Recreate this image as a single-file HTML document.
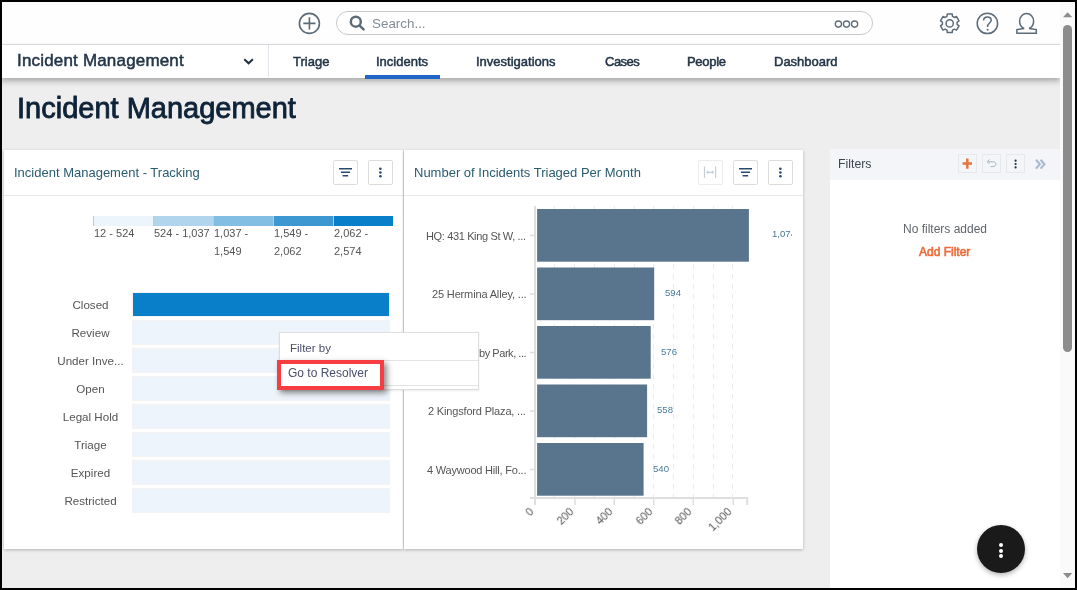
<!DOCTYPE html>
<html><head><meta charset="utf-8">
<style>
*{box-sizing:border-box;margin:0;padding:0}
html,body{width:1077px;height:590px;overflow:hidden;background:#eeeeee;font-family:"Liberation Sans",sans-serif;position:relative}
.a{position:absolute}
.t{position:absolute;white-space:nowrap;line-height:1;will-change:transform}
svg{position:absolute;overflow:visible}
</style></head><body>
  <!-- top header -->
  <div class="a" style="left:0;top:0;width:1060px;height:44px;background:#fefefe"></div>
  <div class="a" style="left:0;top:44px;width:1060px;height:1px;background:#dde1e5"></div>
  <svg style="left:0;top:0" width="1077" height="45">
    <g fill="none" stroke="#5b6b78" stroke-width="1.6">
      <circle cx="309.4" cy="23.4" r="10"/>
      <path d="M303.3 23.4H315.5M309.4 17.3V29.5"/>
    </g>
    <rect x="336.5" y="11.5" width="536" height="23" rx="11.5" fill="#fff" stroke="#c9c9c9"/>
    <g fill="none" stroke="#5b6b78" stroke-width="2.5">
      <circle cx="355.8" cy="21.7" r="5"/>
      <path d="M359.6 25.6L363.6 29.4" stroke-linecap="round"/>
    </g>
    <g fill="none" stroke="#5f6f7b" stroke-width="1.35">
      <circle cx="838.4" cy="24.1" r="3.1"/>
      <circle cx="846.5" cy="24.1" r="3.1"/>
      <circle cx="854.6" cy="24.1" r="3.1"/>
    </g>
    <!-- gear -->
    <g fill="none" stroke="#5b6b78" stroke-width="1.5">
      <path d="M952.52 16.44 L952.23 14.03 L947.27 14.03 L946.98 16.44 L945.19 17.47 L942.96 16.51 L940.48 20.82 L942.42 22.27 L942.42 24.33 L940.48 25.78 L942.96 30.09 L945.19 29.13 L946.98 30.16 L947.27 32.57 L952.23 32.57 L952.52 30.16 L954.31 29.13 L956.54 30.09 L959.02 25.78 L957.08 24.33 L957.08 22.27 L959.02 20.82 L956.54 16.51 L954.31 17.47Z" stroke-linejoin="round"/>
      <circle cx="949.7" cy="23.4" r="3.6"/>
    </g>
    <!-- help -->
    <g fill="none" stroke="#5b6b78" stroke-width="1.5">
      <circle cx="987.4" cy="23.4" r="10.2"/>
      <path d="M983.6 20.4C983.6 18.3 985.2 16.9 987.4 16.9C989.6 16.9 991.2 18.4 991.2 20.3C991.2 22.6 987.6 23.4 987.6 26.3V27"/>
    </g>
    <circle cx="987.6" cy="29.8" r="1" fill="#5b6b78"/>
    <!-- user -->
    <g fill="none" stroke="#5b6b78" stroke-width="1.5">
      <path d="M1023.6 28.2C1021.2 26.9 1019.6 24.3 1019.6 21.2C1019.6 16.8 1022.8 13.5 1026.6 13.5C1030.4 13.5 1033.6 16.8 1033.6 21.2C1033.6 24.3 1032 26.9 1029.6 28.2V28.6L1036.3 29.6V33.2H1016.9V29.6L1023.6 28.6Z"/>
    </g>
  </svg>
  <div class="t" style="left:371.5px;top:16.5px;font-size:13.4px;color:#838d96">Search...</div>

  <!-- nav bar -->
  <div class="a" style="left:0;top:45px;width:1060px;height:33px;background:#fff;box-shadow:0 3px 6px rgba(0,0,0,.3)"></div>
  <div class="a" style="left:268px;top:45px;width:1px;height:32px;background:#e3e6ea"></div>
  <div class="t" style="left:17px;top:51.5px;font-size:17px;letter-spacing:0.18px;color:#243547;-webkit-text-stroke:0.5px #243547">Incident Management</div>
  <svg style="left:0;top:0" width="300" height="80"><path d="M244.3 59.3L248.6 63.3L252.9 59.3" fill="none" stroke="#1f2f3f" stroke-width="2"/></svg>
  <div class="t" style="left:293px;top:54.7px;font-size:13px;color:#243547;-webkit-text-stroke:0.5px #243547">Triage</div>
  <div class="t" style="left:376px;top:54.7px;font-size:13px;color:#243547;-webkit-text-stroke:0.5px #243547">Incidents</div>
  <div class="a" style="left:365px;top:75px;width:75px;height:4px;background:#2166c6"></div>
  <div class="t" style="left:476px;top:54.7px;font-size:13px;color:#243547;-webkit-text-stroke:0.5px #243547">Investigations</div>
  <div class="t" style="left:605px;top:54.7px;font-size:13px;letter-spacing:-0.5px;color:#243547;-webkit-text-stroke:0.5px #243547">Cases</div>
  <div class="t" style="left:687px;top:54.7px;font-size:13px;letter-spacing:-0.3px;color:#243547;-webkit-text-stroke:0.5px #243547">People</div>
  <div class="t" style="left:774px;top:54.7px;font-size:13px;color:#243547;-webkit-text-stroke:0.5px #243547">Dashboard</div>

  <!-- page title -->
  <div class="t" style="left:17px;top:94px;font-size:29px;color:#0f2338;-webkit-text-stroke:0.85px #0f2338">Incident Management</div>

  <!-- card 1 -->
  <div class="a" style="left:4px;top:150px;width:399px;height:399px;background:#fff;box-shadow:0 1px 3px rgba(0,0,0,.25)"></div>
  <div class="a" style="left:4px;top:195px;width:399px;height:1px;background:#e6e8ea"></div>
  <div class="t" style="left:14px;top:166px;font-size:13px;color:#2a5c71">Incident Management - Tracking</div>
  <div class="a" style="left:333px;top:160px;width:25px;height:25px;border:1px solid #dcdcdc;border-radius:2px;background:#fff"></div>
  <div class="a" style="left:368px;top:160px;width:25px;height:25px;border:1px solid #dcdcdc;border-radius:2px;background:#fff"></div>
  <svg style="left:0;top:0" width="410" height="200">
    <g stroke="#274b6d" stroke-width="1.4" fill="none">
      <path d="M339 168.8H352M341 172.3H350M342.6 175.8H348.2"/>
    </g>
    <g fill="#274b6d"><circle cx="380.4" cy="168.8" r="1.3"/><circle cx="380.4" cy="172.5" r="1.3"/><circle cx="380.4" cy="176.3" r="1.3"/></g>
  </svg>
  <div class="a" style="left:93px;top:216px;width:60px;height:10px;background:#edf5fc;border-left:1px solid #c8c8c8"></div>
  <div class="a" style="left:153px;top:216px;width:60px;height:10px;background:#b1d5ec;border-left:1px solid #c8c8c8"></div>
  <div class="a" style="left:213px;top:216px;width:60px;height:10px;background:#82bde3;border-left:1px solid #c8c8c8"></div>
  <div class="a" style="left:273px;top:216px;width:60px;height:10px;background:#3d98d2;border-left:1px solid #c8c8c8"></div>
  <div class="a" style="left:333px;top:216px;width:60px;height:10px;background:#0a7fc9;border-left:1px solid #c8c8c8"></div>
  <div class="t" style="left:94px;top:223.5px;font-size:11px;line-height:18px;color:#555">12 - 524</div>
  <div class="t" style="left:154px;top:223.5px;font-size:11px;line-height:18px;color:#555">524 - 1,037</div>
  <div class="t" style="left:214px;top:223.5px;font-size:11px;line-height:18px;color:#555">1,037 -<br>1,549</div>
  <div class="t" style="left:274px;top:223.5px;font-size:11px;line-height:18px;color:#555">1,549 -<br>2,062</div>
  <div class="t" style="left:334px;top:223.5px;font-size:11px;line-height:18px;color:#555">2,062 -<br>2,574</div>
  <div class="a" style="left:132px;top:292px;width:258px;height:25px;background:#087fc8;border:1px solid #f3f3f3"></div>
  <div class="t" style="left:30px;width:121px;text-align:center;top:299px;font-size:11.6px;color:#555">Closed</div>
  <div class="a" style="left:132px;top:320px;width:258px;height:25px;background:#edf4fb;border:1px solid #f3f3f3"></div>
  <div class="t" style="left:30px;width:121px;text-align:center;top:327px;font-size:11.6px;color:#555">Review</div>
  <div class="a" style="left:132px;top:348px;width:258px;height:25px;background:#edf4fb;border:1px solid #f3f3f3"></div>
  <div class="t" style="left:30px;width:121px;text-align:center;top:355px;font-size:11.6px;color:#555">Under Inve...</div>
  <div class="a" style="left:132px;top:376px;width:258px;height:25px;background:#edf4fb;border:1px solid #f3f3f3"></div>
  <div class="t" style="left:30px;width:121px;text-align:center;top:383px;font-size:11.6px;color:#555">Open</div>
  <div class="a" style="left:132px;top:404px;width:258px;height:25px;background:#edf4fb;border:1px solid #f3f3f3"></div>
  <div class="t" style="left:30px;width:121px;text-align:center;top:411px;font-size:11.6px;color:#555">Legal Hold</div>
  <div class="a" style="left:132px;top:432px;width:258px;height:25px;background:#edf4fb;border:1px solid #f3f3f3"></div>
  <div class="t" style="left:30px;width:121px;text-align:center;top:439px;font-size:11.6px;color:#555">Triage</div>
  <div class="a" style="left:132px;top:460px;width:258px;height:25px;background:#edf4fb;border:1px solid #f3f3f3"></div>
  <div class="t" style="left:30px;width:121px;text-align:center;top:467px;font-size:11.6px;color:#555">Expired</div>
  <div class="a" style="left:132px;top:488px;width:258px;height:25px;background:#edf4fb;border:1px solid #f3f3f3"></div>
  <div class="t" style="left:30px;width:121px;text-align:center;top:495px;font-size:11.6px;color:#555">Restricted</div>
  <!-- card 2 -->
  <div class="a" style="left:404px;top:150px;width:399px;height:399px;background:#fff;box-shadow:0 1px 3px rgba(0,0,0,.25)"></div>
  <div class="a" style="left:404px;top:195px;width:399px;height:1px;background:#e6e8ea"></div>
  <div class="t" style="left:414px;top:166px;font-size:13px;color:#2a5c71">Number of Incidents Triaged Per Month</div>
  <div class="a" style="left:698px;top:160px;width:25px;height:25px;border:1px solid #ececec;border-radius:2px;background:#fff"></div>
  <div class="a" style="left:733px;top:160px;width:25px;height:25px;border:1px solid #dcdcdc;border-radius:2px;background:#fff"></div>
  <div class="a" style="left:768px;top:160px;width:25px;height:25px;border:1px solid #dcdcdc;border-radius:2px;background:#fff"></div>
  <svg style="left:0;top:0" width="810" height="560">
    <g stroke="#c3ced8" stroke-width="1.2" fill="none">
      <path d="M704.5 166.5V178M715.6 166.5V178M707 172.3H713.3M708.3 171L707 172.3L708.3 173.6M712 171L713.3 172.3L712 173.6"/>
    </g>
    <g stroke="#274b6d" stroke-width="1.4" fill="none">
      <path d="M739 168.8H752M741 172.3H750M742.6 175.8H748.2"/>
    </g>
    <g fill="#274b6d"><circle cx="780.4" cy="168.8" r="1.3"/><circle cx="780.4" cy="172.5" r="1.3"/><circle cx="780.4" cy="176.3" r="1.3"/></g>
    <g stroke="#ebebeb" stroke-width="1" stroke-dasharray="5 5" stroke-dashoffset="2">
      <path d="M554.5 206V497"/>
      <path d="M574.5 206V497"/>
      <path d="M594.5 206V497"/>
      <path d="M614.5 206V497"/>
      <path d="M634.5 206V497"/>
      <path d="M653.5 206V497"/>
      <path d="M673.5 206V497"/>
      <path d="M693.5 206V497"/>
      <path d="M713.5 206V497"/>
      <path d="M732.5 206V497"/>
    </g>
    <g fill="#58758d">
      <rect x="537.1" y="209.0" width="211.8" height="52.7"/>
      <rect x="537.1" y="267.5" width="117.1" height="52.7"/>
      <rect x="537.1" y="326.0" width="113.6" height="52.7"/>
      <rect x="537.1" y="384.5" width="110.0" height="52.7"/>
      <rect x="537.1" y="443.0" width="106.5" height="52.7"/>
    </g>
    <path d="M535 206V505M530 498H748M747.2 498V505" stroke="#dedede" stroke-width="2" fill="none"/>
    <path d="M530 235.5H535" stroke="#dedede" stroke-width="1.5"/>
    <path d="M530 294.0H535" stroke="#dedede" stroke-width="1.5"/>
    <path d="M530 352.5H535" stroke="#dedede" stroke-width="1.5"/>
    <path d="M530 411.0H535" stroke="#dedede" stroke-width="1.5"/>
    <path d="M530 469.5H535" stroke="#dedede" stroke-width="1.5"/>
    <path d="M575.0 498V505" stroke="#dedede" stroke-width="1.5"/>
    <path d="M614.2 498V505" stroke="#dedede" stroke-width="1.5"/>
    <path d="M653.7 498V505" stroke="#dedede" stroke-width="1.5"/>
    <path d="M693.3 498V505" stroke="#dedede" stroke-width="1.5"/>
    <path d="M733.2 498V505" stroke="#dedede" stroke-width="1.5"/>
  </svg>
  <div class="t" style="right:551px;top:230.8px;font-size:11px;letter-spacing:-0.36px;color:#555">HQ: 431 King St W, ...</div>
  <div class="t" style="right:551px;top:289.3px;font-size:11px;letter-spacing:-0.15px;color:#555">25 Hermina Alley, ...</div>
  <div class="t" style="right:551px;top:347.8px;font-size:11px;letter-spacing:-0.45px;color:#555">by Park, ...</div>
  <div class="t" style="right:551px;top:406.3px;font-size:11px;letter-spacing:-0.17px;color:#555">2 Kingsford Plaza, ...</div>
  <div class="t" style="right:551px;top:464.8px;font-size:11px;letter-spacing:-0.20px;color:#555">4 Waywood Hill, Fo...</div>
  <div class="a" style="left:771.7px;top:228.8px;width:20.8px;height:14px;overflow:hidden"><div class="t" style="left:0;top:0;font-size:9.6px;color:#4a7a99">1,074</div></div>
  <div class="t" style="left:664.6px;top:288.3px;font-size:9.6px;color:#4a7a99">594</div>
  <div class="t" style="left:660.5px;top:346.8px;font-size:9.6px;color:#4a7a99">576</div>
  <div class="t" style="left:657.0px;top:405.3px;font-size:9.6px;color:#4a7a99">558</div>
  <div class="t" style="left:653.2px;top:463.8px;font-size:9.6px;color:#4a7a99">540</div>
  <div class="t" style="left:528.1px;top:506px;font-size:11px;color:#555;transform-origin:100% 0;transform:translateX(-100%) rotate(-45deg)">0</div>
  <div class="t" style="left:568.0px;top:506px;font-size:11px;color:#555;transform-origin:100% 0;transform:translateX(-100%) rotate(-45deg)">200</div>
  <div class="t" style="left:607.2px;top:506px;font-size:11px;color:#555;transform-origin:100% 0;transform:translateX(-100%) rotate(-45deg)">400</div>
  <div class="t" style="left:646.7px;top:506px;font-size:11px;color:#555;transform-origin:100% 0;transform:translateX(-100%) rotate(-45deg)">600</div>
  <div class="t" style="left:686.3px;top:506px;font-size:11px;color:#555;transform-origin:100% 0;transform:translateX(-100%) rotate(-45deg)">800</div>
  <div class="t" style="left:726.2px;top:506px;font-size:11px;color:#555;transform-origin:100% 0;transform:translateX(-100%) rotate(-45deg)">1,000</div>
  <!-- context menu -->
  <div class="a" style="left:279px;top:332px;width:200px;height:58px;background:#fff;border:1px solid #dedede;box-shadow:0 1px 2px rgba(0,0,0,.08)"></div>
  <div class="a" style="left:280px;top:360px;width:198px;height:1px;background:#e4e4e4"></div>
  <div class="a" style="left:280px;top:385px;width:198px;height:1px;background:#e4e4e4"></div>
  <div class="t" style="left:290px;top:342.5px;font-size:11.5px;color:#4a4f6a">Filter by</div>
  <div class="a" style="left:277px;top:359.5px;width:107px;height:30.5px;border:4.3px solid #f63e42;background:#fff;box-shadow:3px 3px 6px rgba(0,0,0,.45)"></div>
  <div class="t" style="left:288px;top:367px;font-size:12px;color:#4a4f6a">Go to Resolver</div>
  <!-- filter panel -->
  <div class="a" style="left:830px;top:149px;width:230px;height:441px;background:#fff"></div>
  <div class="a" style="left:830px;top:149px;width:230px;height:31px;background:#f3f5f8"></div>


  <div class="t" style="left:838px;top:158px;font-size:12.3px;color:#3d4650">Filters</div>
  <div class="a" style="left:958px;top:154px;width:19px;height:19px;border:1px solid #e6e8eb;background:#f3f5f8"></div>
  <div class="a" style="left:982px;top:154px;width:19px;height:19px;border:1px solid #e6e8eb;background:#f3f5f8"></div>
  <div class="a" style="left:1006px;top:154px;width:19px;height:19px;border:1px solid #e6e8eb;background:#f3f5f8"></div>
  <svg style="left:0;top:0" width="1077" height="200">
    <path d="M967.3 158.5V168.8M962.6 163.5H972" stroke="#e8743b" stroke-width="2.5" fill="none"/>
    <path d="M989.5 159.5L987.3 161.8L989.5 164M987.5 161.8H993.3C994.8 161.8 996 162.8 996 164.2C996 165.6 994.8 166.6 993.3 166.6H990.5" stroke="#aab5c0" stroke-width="1" fill="none"/>
    <g fill="#1f2f44"><circle cx="1015.6" cy="160.7" r="1.1"/><circle cx="1015.6" cy="164" r="1.1"/><circle cx="1015.6" cy="167.4" r="1.1"/></g>
    <path d="M1036 159.8L1039.8 164.2L1036 168.6M1040.6 159.8L1044.4 164.2L1040.6 168.6" stroke="#aabbd0" stroke-width="2.2" fill="none"/>
  </svg>
  <div class="t" style="left:903px;top:223px;font-size:12px;color:#5f666d">No filters added</div>
  <div class="t" style="left:919px;top:246px;font-size:12px;color:#eb6c3b;-webkit-text-stroke:0.6px #eb6c3b">Add Filter</div>
  <!-- scrollbar -->
  <div class="a" style="left:1060px;top:0;width:15px;height:590px;background:#fafafa"></div>
  <svg style="left:0;top:0" width="1077" height="590">
    <path d="M1063 17.2L1067.6 12.2L1072.3 17.2Z" fill="#8c8c8c"/>
    <path d="M1063 573L1067.6 578.3L1072.3 573Z" fill="#8c8c8c"/>
  </svg>
  <div class="a" style="left:1063px;top:25px;width:9px;height:327px;background:#8c8c8c;border-radius:4.5px"></div>

  <!-- FAB -->
  <div class="a" style="left:977px;top:525px;width:48px;height:48px;border-radius:50%;background:#1a1a1a;box-shadow:0 2px 5px rgba(0,0,0,.3)"></div>


  <div class="a" style="left:999px;top:543.2px;width:4px;height:4px;border-radius:50%;background:#fff"></div>
  <div class="a" style="left:999px;top:548.5px;width:4px;height:4px;border-radius:50%;background:#fff"></div>
  <div class="a" style="left:999px;top:553.8px;width:4px;height:4px;border-radius:50%;background:#fff"></div>
  <!-- black frame -->
  <div class="a" style="left:0;top:0;width:1077px;height:2px;background:#000"></div>
  <div class="a" style="left:0;top:0;width:2px;height:590px;background:#000"></div>
  <div class="a" style="left:1075px;top:0;width:2px;height:590px;background:#000"></div>
  <div class="a" style="left:0;top:588px;width:1077px;height:2px;background:#000"></div>
</body></html>
